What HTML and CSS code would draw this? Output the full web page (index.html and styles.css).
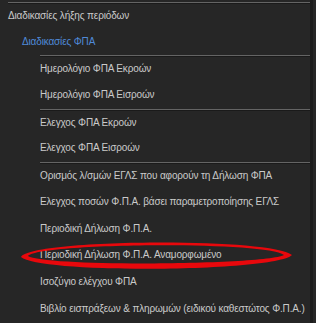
FILE: index.html
```html
<!DOCTYPE html>
<html lang="el">
  <head>
    <meta charset="UTF-8" />
    <title>Διαδικασίες λήξης περιόδων</title>
    <link rel="stylesheet" href="styles.css">
  </head>
  <body>
    <div class="menu">
      <div class="row top sep">Διαδικασίες λήξης περιόδων</div>
      <div class="row group">Διαδικασίες ΦΠΑ</div>
      <div class="row item sep">Ημερολόγιο ΦΠΑ Εκροών</div>
      <div class="row item">Ημερολόγιο ΦΠΑ Εισροών</div>
      <div class="row item sep">Ελεγχος ΦΠΑ Εκροών</div>
      <div class="row item">Ελεγχος ΦΠΑ Εισροών</div>
      <div class="row item sep">Ορισμός λ/σμών ΕΓΛΣ που αφορούν τη Δήλωση ΦΠΑ</div>
      <div class="row item">Ελεγχος ποσών Φ.Π.Α. βάσει παραμετροποίησης ΕΓΛΣ</div>
      <div class="row item">Περιοδική Δήλωση Φ.Π.Α.</div>
      <div class="row item">Περιοδική Δήλωση Φ.Π.Α. Αναμορφωμένο</div>
      <div class="row item">Ισοζύγιο ελέγχου ΦΠΑ</div>
      <div class="row item">Βιβλίο εισπράξεων &amp; πληρωμών (ειδικού καθεστώτος Φ.Π.Α.)</div>

      <!-- hand drawn red mark round the highlighted entry -->
      <svg class="mark" width="316" height="323" viewBox="0 0 316 323">
        <path fill="#e8080c" fill-rule="evenodd"
          d="M21,257 C30,239 270,237 292,255 C275,272 40,274 21,257 Z
             M28,256 C40,243 265,241 284,255 C265,265 45,267 28,256 Z" />
      </svg>
    </div>
  </body>
</html>
```

FILE: styles.css
```css
html,
body {
  margin: 0;
  padding: 0;
  background: #262626;
}
.menu {
  position: relative;
  width: 313px;
  height: 323px;
  padding-top: 2px;
  box-sizing: border-box;
  border-right: 3px solid #1c1c1c;
  background: #262626;
  font-family: "Liberation Sans", Arial, sans-serif;
  font-size: 10px;
  letter-spacing: -0.15px;
  color: #cacaca;
  overflow: hidden;
}
.row {
  box-sizing: border-box;
  height: 26.7px;
  line-height: 26.7px;
  white-space: nowrap;
}
.sep {
  border-top: 1px solid #646464;
  box-shadow: inset 0 1px 0 #1a1a1a;
  line-height: 25px;
}
.top {
  margin-left: 8px;
}
.group {
  padding-left: 22px;
  color: #4f8ad8;
}
.item {
  margin-left: 40px;
}
.mark {
  position: absolute;
  left: 0;
  top: 0;
  pointer-events: none;
}
```
